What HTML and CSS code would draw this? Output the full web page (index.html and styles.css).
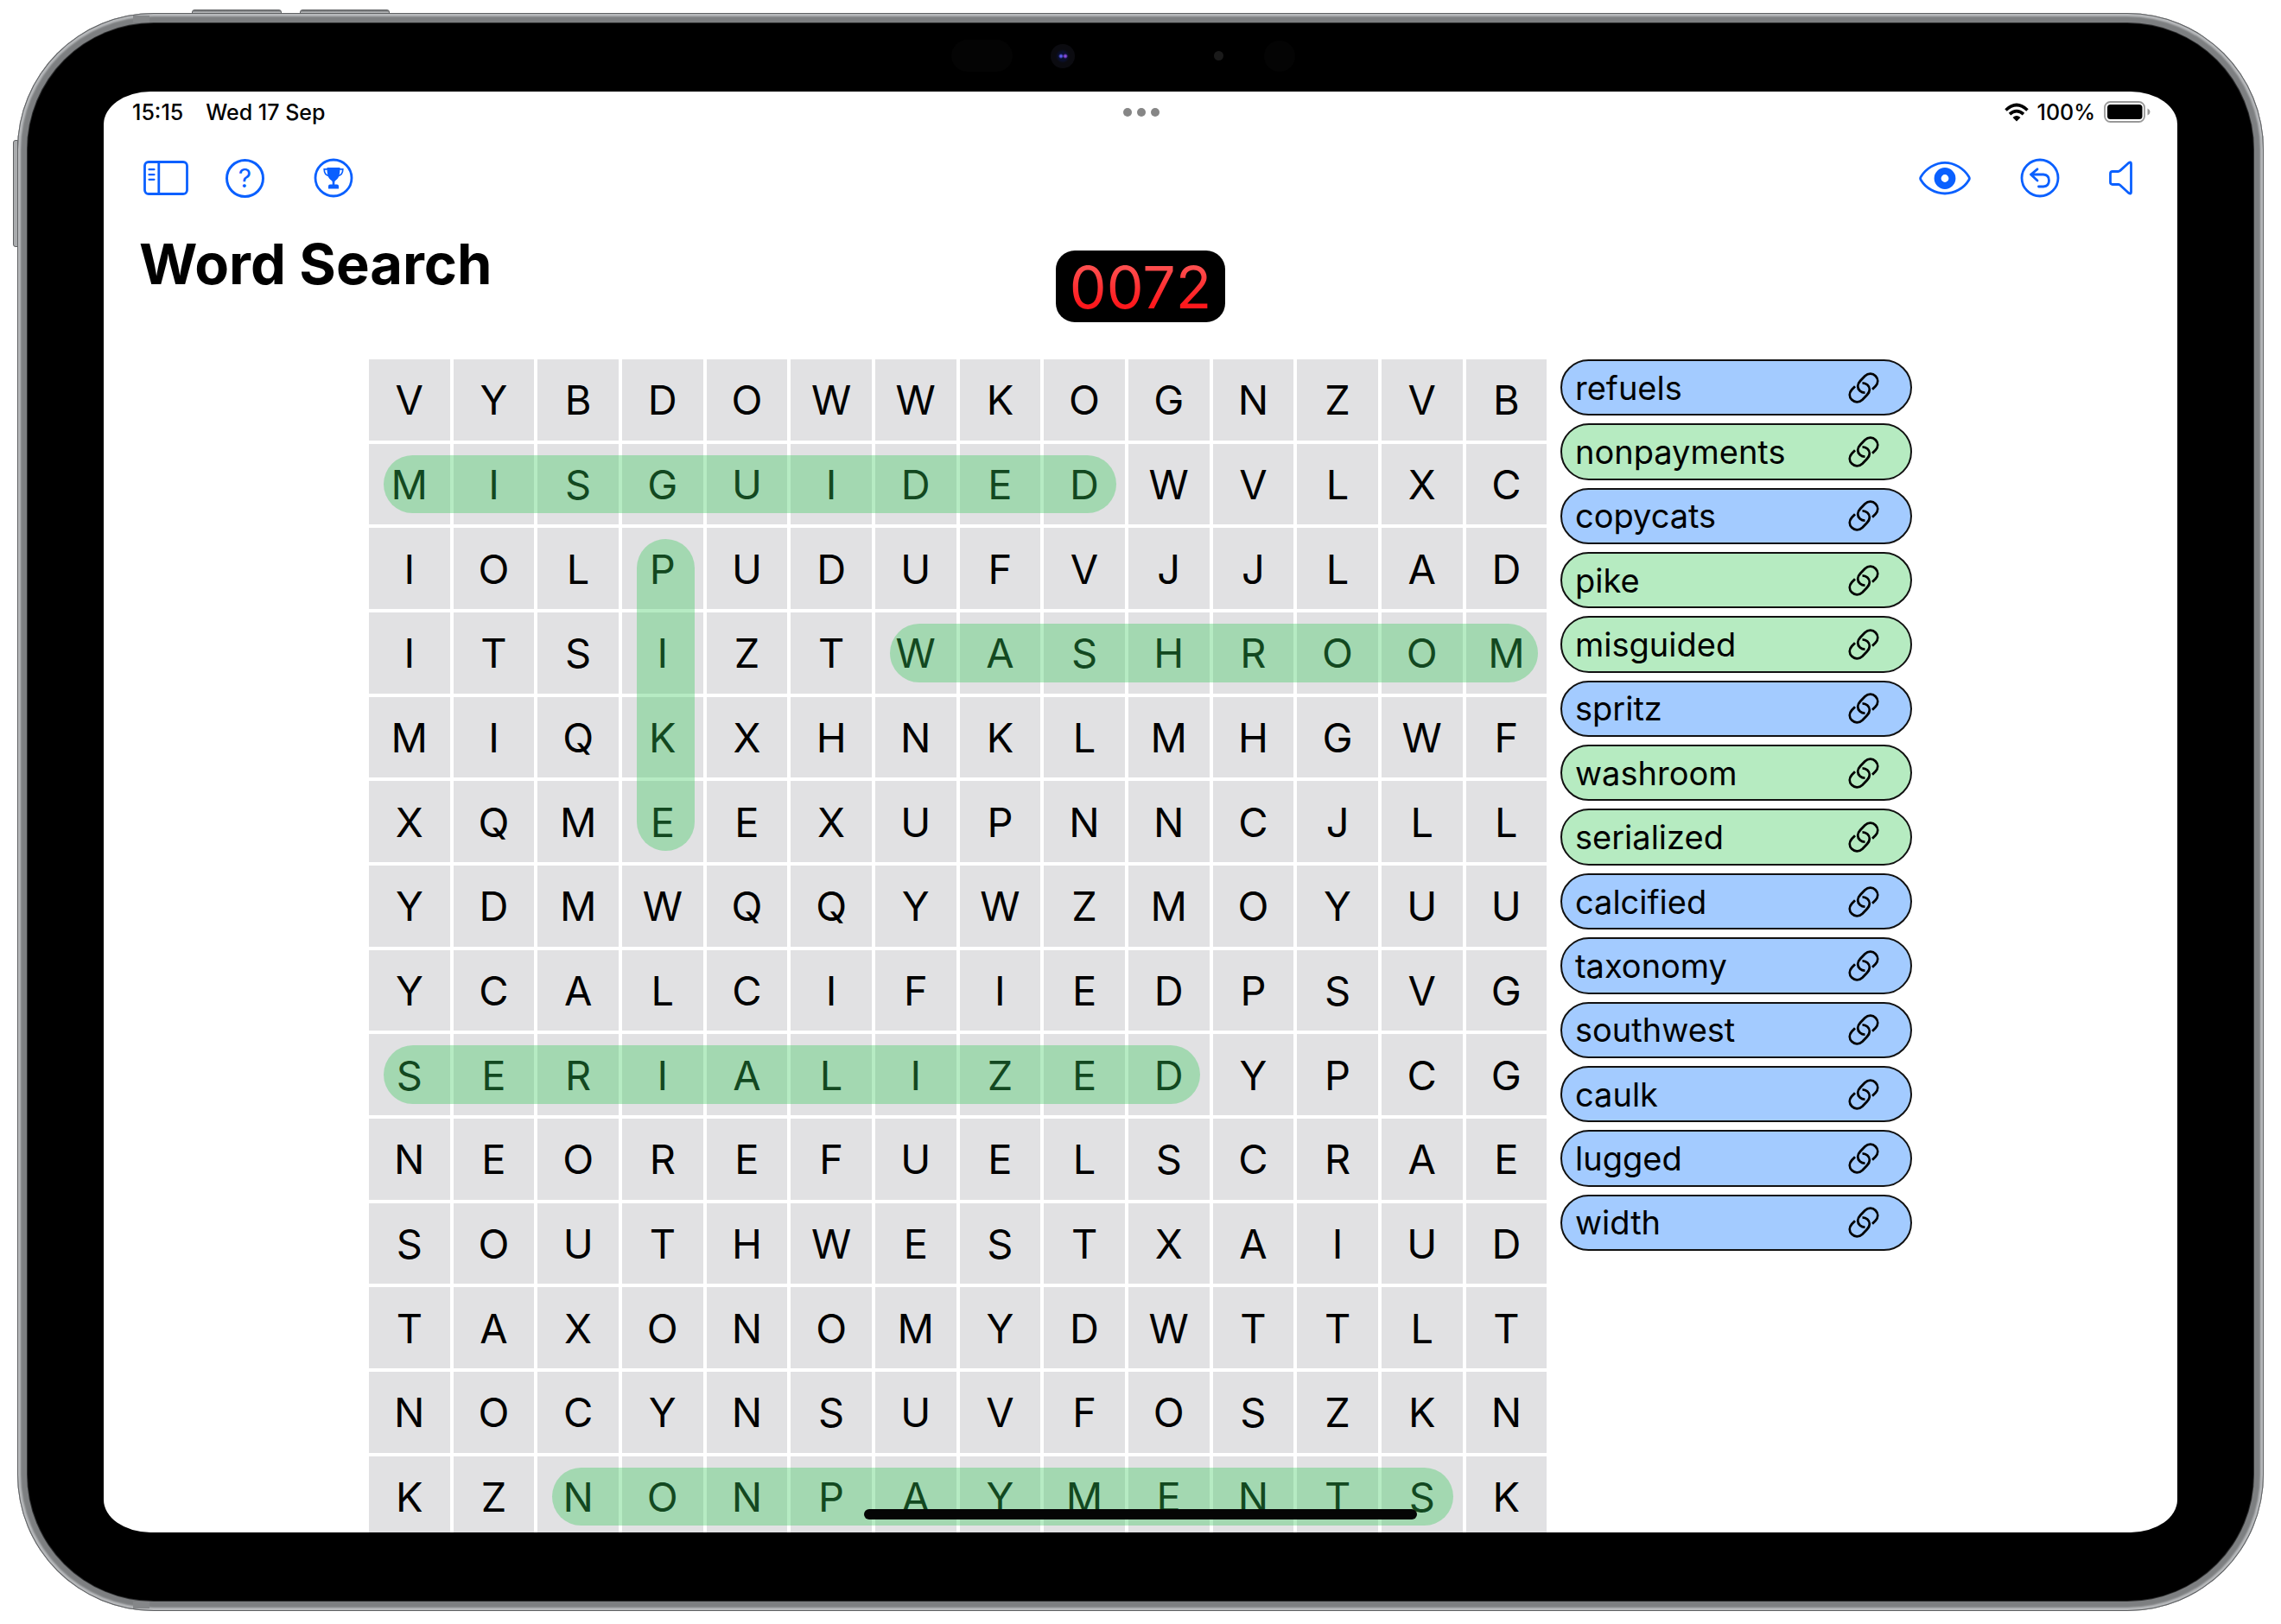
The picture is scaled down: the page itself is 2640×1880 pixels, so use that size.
FILE: index.html
```html
<!DOCTYPE html>
<html lang="en">
<head>
<meta charset="utf-8">
<title>Word Search</title>
<link rel="stylesheet" href="styles.css">
</head>
<body>
<svg class="defs" aria-hidden="true">
  <symbol id="link" viewBox="0 0 36 36">
    <g fill="none" stroke="currentColor" stroke-width="2.8" stroke-linecap="butt" stroke-linejoin="round">
      <path d="M16.500 12.300C21 12.300 24.800 15.500 24.800 20Q24.800 23 22 26L16.500 31.700C12.500 35.500 7.500 35 4.300 31.800C1 28.500 1 23.800 4.300 20L8 16.300"/>
      <path d="M19.500 23.700C15 23.700 11.200 20.500 11.200 16Q11.200 13 14 10L19.500 4.300C23.500 .500 28.500 1 31.700 4.200C35 7.500 35 12.200 31.700 16L28 19.700"/>
    </g>
  </symbol>
</svg>
<div class="device">
  <i class="key key-top-a"></i><i class="key key-top-b"></i><i class="key key-side"></i>
  <i class="band band-top"></i><i class="band band-bottom"></i>
  <div class="bezel">
    <div class="sensors" aria-hidden="true"><i class="s-pill"></i><i class="s-cam"></i><i class="s-mic"></i><i class="s-ring"></i></div>
    <div class="screen">
      <div class="status">
        <div class="status-left"><span>15:15</span><span>Wed 17 Sep</span></div>
        <div class="dots"><i></i><i></i><i></i></div>
        <div class="status-right">
          <svg width="28" height="22" viewBox="0 0 28 22" fill="none" stroke="#000" stroke-width="3.6"><path d="M1.500 8.500Q14-3.500 26.500 8.500"/><path d="M6 13.200Q14 6 22 13.200"/><path d="M14 21.500L9.500 17Q14 13 18.500 17Z" fill="#000" stroke="none"/></svg>
          <span>100%</span>
          <svg width="54" height="26" viewBox="0 0 54 26"><rect x="1" y="1" width="46" height="23" rx="6.500" fill="none" stroke="#999" stroke-width="1.800"/><rect x="4" y="4" width="40.500" height="17" rx="3.500"/><path d="M50.500 8.500Q53.500 10 53.500 12.500T50.500 16.500Z" fill="#999"/></svg>
        </div>
      </div>
      <nav class="toolbar">
        <div class="tools tools-left">
          <button class="tool" aria-label="Sidebar"><svg width="52" height="40" viewBox="0 0 52 40" fill="none" stroke="currentColor" stroke-width="2.800"><rect x="1.500" y="1.500" width="49" height="37" rx="4.500"/><path d="M17.800 1.500V38.500"/><path d="M6.500 10.200H12.500M6.500 16.200H12.500M6.500 21.800H12.500" stroke-width="2.200" stroke-linecap="round"/></svg></button>
          <button class="tool tool-help" aria-label="Help">?</button>
          <button class="tool tool-trophy" aria-label="Trophies"><svg width="46" height="46" viewBox="0 0 46 46" fill="none" stroke="currentColor"><circle cx="23" cy="23" r="21" stroke-width="2.800"/><path d="M15.500 11H30.500C30.500 18.500 29.500 23.500 25 26.200Q24.300 26.700 24.300 28V30.500H27Q29 30.500 29 32.500V35.500H17V32.500Q17 30.500 19 30.500H21.700V28Q21.700 26.700 21 26.200C16.500 23.500 15.500 18.500 15.500 11Z" fill="currentColor" stroke="none"/><path d="M16 12.800H12.200Q12.200 19.800 18.200 20.800M30 12.800H33.800Q33.800 19.800 27.800 20.800" stroke-width="1.700"/></svg></button>
        </div>
        <div class="tools tools-right">
          <button class="tool" aria-label="Reveal"><svg width="60" height="40" viewBox="0 0 60 40" fill="none" stroke="currentColor" stroke-width="2.800"><path d="M2.300 22.500Q1 20.500 2.300 18.500C8 9 19 2.300 30 2.300S52 9 57.700 18.500Q59 20.500 57.700 22.500C52 32 41 38 30 38S8 32 2.300 22.500Z"/><circle cx="30" cy="20.500" r="8.400" stroke-width="8"/></svg></button>
          <button class="tool" aria-label="Undo"><svg width="46" height="46" viewBox="0 0 46 46" fill="none" stroke="currentColor" stroke-width="2.800" stroke-linecap="round" stroke-linejoin="round"><circle cx="23" cy="23" r="21"/><path d="M20 12.800L12.500 19L20 26M12.500 19H27Q33.500 19.500 33.500 26T27 33H21.500"/></svg></button>
          <button class="tool" aria-label="Sound"><svg width="28" height="40" viewBox="0 0 28 40" fill="none" stroke="currentColor" stroke-width="2.800" stroke-linejoin="round"><path d="M4 12.500H10.500Q11.800 12.500 12.700 11.600L22.500 2.700Q25.500 .800 25.500 3.500V36.500Q25.500 39.200 22.500 37.300L12.700 28.300Q11.800 27.500 10.500 27.500H4Q1.500 27.500 1.500 25V15Q1.500 12.500 4 12.500Z"/></svg></button>
        </div>
      </nav>
      <header class="heading">
        <h1>Word Search</h1>
        <div class="timer"><span>0072</span></div>
      </header>
      <main class="game">
        <div class="board">
          <div class="letters">
            <b>V</b><b>Y</b><b>B</b><b>D</b><b>O</b><b>W</b><b>W</b><b>K</b><b>O</b><b>G</b><b>N</b><b>Z</b><b>V</b><b>B</b>
            <b>M</b><b>I</b><b>S</b><b>G</b><b>U</b><b>I</b><b>D</b><b>E</b><b>D</b><b>W</b><b>V</b><b>L</b><b>X</b><b>C</b>
            <b>I</b><b>O</b><b>L</b><b>P</b><b>U</b><b>D</b><b>U</b><b>F</b><b>V</b><b>J</b><b>J</b><b>L</b><b>A</b><b>D</b>
            <b>I</b><b>T</b><b>S</b><b>I</b><b>Z</b><b>T</b><b>W</b><b>A</b><b>S</b><b>H</b><b>R</b><b>O</b><b>O</b><b>M</b>
            <b>M</b><b>I</b><b>Q</b><b>K</b><b>X</b><b>H</b><b>N</b><b>K</b><b>L</b><b>M</b><b>H</b><b>G</b><b>W</b><b>F</b>
            <b>X</b><b>Q</b><b>M</b><b>E</b><b>E</b><b>X</b><b>U</b><b>P</b><b>N</b><b>N</b><b>C</b><b>J</b><b>L</b><b>L</b>
            <b>Y</b><b>D</b><b>M</b><b>W</b><b>Q</b><b>Q</b><b>Y</b><b>W</b><b>Z</b><b>M</b><b>O</b><b>Y</b><b>U</b><b>U</b>
            <b>Y</b><b>C</b><b>A</b><b>L</b><b>C</b><b>I</b><b>F</b><b>I</b><b>E</b><b>D</b><b>P</b><b>S</b><b>V</b><b>G</b>
            <b>S</b><b>E</b><b>R</b><b>I</b><b>A</b><b>L</b><b>I</b><b>Z</b><b>E</b><b>D</b><b>Y</b><b>P</b><b>C</b><b>G</b>
            <b>N</b><b>E</b><b>O</b><b>R</b><b>E</b><b>F</b><b>U</b><b>E</b><b>L</b><b>S</b><b>C</b><b>R</b><b>A</b><b>E</b>
            <b>S</b><b>O</b><b>U</b><b>T</b><b>H</b><b>W</b><b>E</b><b>S</b><b>T</b><b>X</b><b>A</b><b>I</b><b>U</b><b>D</b>
            <b>T</b><b>A</b><b>X</b><b>O</b><b>N</b><b>O</b><b>M</b><b>Y</b><b>D</b><b>W</b><b>T</b><b>T</b><b>L</b><b>T</b>
            <b>N</b><b>O</b><b>C</b><b>Y</b><b>N</b><b>S</b><b>U</b><b>V</b><b>F</b><b>O</b><b>S</b><b>Z</b><b>K</b><b>N</b>
            <b>K</b><b>Z</b><b>N</b><b>O</b><b>N</b><b>P</b><b>A</b><b>Y</b><b>M</b><b>E</b><b>N</b><b>T</b><b>S</b><b>K</b>
          </div>
          <div class="marks" aria-hidden="true">
            <i class="mark-misguided"></i><i class="mark-pike"></i><i class="mark-washroom"></i><i class="mark-serialized"></i><i class="mark-nonpayments"></i>
          </div>
        </div>
        <ul class="words">
          <li>refuels<a href="#refuels" aria-label="Look up refuels"><svg><use href="#link"/></svg></a></li>
          <li class="found">nonpayments<a href="#nonpayments" aria-label="Look up nonpayments"><svg><use href="#link"/></svg></a></li>
          <li>copycats<a href="#copycats" aria-label="Look up copycats"><svg><use href="#link"/></svg></a></li>
          <li class="found">pike<a href="#pike" aria-label="Look up pike"><svg><use href="#link"/></svg></a></li>
          <li class="found">misguided<a href="#misguided" aria-label="Look up misguided"><svg><use href="#link"/></svg></a></li>
          <li>spritz<a href="#spritz" aria-label="Look up spritz"><svg><use href="#link"/></svg></a></li>
          <li class="found">washroom<a href="#washroom" aria-label="Look up washroom"><svg><use href="#link"/></svg></a></li>
          <li class="found">serialized<a href="#serialized" aria-label="Look up serialized"><svg><use href="#link"/></svg></a></li>
          <li>calcified<a href="#calcified" aria-label="Look up calcified"><svg><use href="#link"/></svg></a></li>
          <li>taxonomy<a href="#taxonomy" aria-label="Look up taxonomy"><svg><use href="#link"/></svg></a></li>
          <li>southwest<a href="#southwest" aria-label="Look up southwest"><svg><use href="#link"/></svg></a></li>
          <li>caulk<a href="#caulk" aria-label="Look up caulk"><svg><use href="#link"/></svg></a></li>
          <li>lugged<a href="#lugged" aria-label="Look up lugged"><svg><use href="#link"/></svg></a></li>
          <li>width<a href="#width" aria-label="Look up width"><svg><use href="#link"/></svg></a></li>
        </ul>
      </main>
      <i class="home-bar"></i>
    </div>
  </div>
</div>
</body>
</html>
```
FILE: styles.css
```css
* { box-sizing: border-box; }

body {
  margin: 0;
  padding: 15px 20px;
  height: 100vh;
  background: #fff;
  color: #000;
  font-family: Inter, "Liberation Sans", sans-serif;
}

.defs { position: absolute; width: 0; height: 0; }

/* Tablet body */
.device {
  position: relative;
  height: 100%;
  padding: 12px;
  border-radius: 158px;
  background: #7d7f81;
  box-shadow: inset 0 0 0 1px #5f6163, inset 0 0 2px 4px #b8babc;
}

.bezel {
  height: 100%;
  display: flex;
  flex-direction: column;
  padding: 0 88px 79px;
  border-radius: 146px;
  background: #000;
  box-shadow: 0 0 0 1px #2c2d2e;
}

.key { position: absolute; background: linear-gradient(#6b6d6f, #c0c2c4); border: 1px solid #5f6163; }
.key-top-a, .key-top-b { top: -4px; width: 104px; height: 5px; border-radius: 3px 3px 0 0; }
.key-top-a { left: 202px; }
.key-top-b { left: 327px; }
.key-side { left: -5px; top: 147px; width: 6px; height: 124px; border-radius: 3px 0 0 3px; background: #a9abad; }
.band { position: absolute; left: 134px; width: 19px; height: 8px; background: #858789; }
.band-top { top: 3px; }
.band-bottom { bottom: 3px; }

.sensors {
  display: grid;
  grid-template-columns: 1fr 71px 44px 28px 161px 11px 47px 36px 1fr;
  justify-content: center;
  align-items: center;
  height: 79px;
  padding: 0 40px 4px 0;
}
.sensors i { border-radius: 50px; background: #040404; }
.s-pill { grid-column: 2; height: 37px; }
.s-cam { grid-column: 4; height: 28px; }
.s-mic { grid-column: 6; height: 11px; }
.s-ring { grid-column: 8; height: 36px; }
.sensors .s-cam { background: radial-gradient(circle at 12px 14px, #5a5cf0 1px, transparent 3px), radial-gradient(circle at 17px 14px, #8a4ae0 1px, transparent 3px), radial-gradient(circle at 14px 14px, #0a1030 5px, #0b0b10 8px); }
.sensors .s-mic { background: #1a1a1a; }

/* Screen */
.screen {
  position: relative;
  flex: 1;
  min-height: 0;
  overflow: hidden;
  background: #fff;
  border-radius: 54px / 38px;
}

.status {
  display: grid;
  grid-template-columns: 1fr auto 1fr;
  align-items: center;
  height: 48px;
  padding: 0 31px 0 33px;
  font-size: 24px;
  font-weight: 500;
}
.status-left { display: flex; gap: 26px; }
.status-left, .status-right { font-size: 25px; }
.status-right { display: flex; align-items: center; justify-content: flex-end; gap: 10px; }
.dots { display: flex; gap: 6px; }
.dots i { width: 10px; height: 10px; border-radius: 50%; background: #868686; }

.toolbar {
  display: flex;
  justify-content: space-between;
  height: 104px;
  padding: 0 51px 0 46px;
}
.tools { display: flex; align-items: center; }
.tools-left { gap: 43px; }
.tools-right { gap: 57px; }
.tool { display: block; margin: 0; padding: 0; border: 0; background: none; color: #0a60ff; font: inherit; }
.tool svg { display: block; }
.tool-help { width: 45px; height: 45px; border: 3px solid #0a60ff; border-radius: 50%; font-size: 30px; line-height: 38px; text-align: center; }
.tool-trophy { margin-left: 14px; }

.heading {
  display: grid;
  grid-template-columns: 1fr auto 1fr;
  align-items: start;
  height: 158px;
  padding: 0 41px;
}
h1 { margin: 8px 0 0; font-size: 65px; line-height: 80px; font-weight: 700; }
.timer { margin-top: 32px; width: 196px; height: 83px; border-radius: 22px; background: #000; text-align: center; font-size: 68px; line-height: 84px; }
.timer span { background: linear-gradient(#ff5050 20%, #ff181c 75%); -webkit-background-clip: text; background-clip: text; color: transparent; }

.game {
  display: flex;
  justify-content: center;
  align-items: flex-start;
  gap: 16px;
  padding: 0 307px;
}
.board { position: relative; flex: 1; }
.letters, .marks { display: grid; grid-template-columns: repeat(14, 1fr); gap: 4px; }
.letters b {
  display: flex;
  align-items: center;
  justify-content: center;
  aspect-ratio: 1;
  background: #e1e1e3;
  font-size: 47px;
  font-weight: 400;
}
.marks { position: absolute; inset: 0; grid-template-rows: repeat(14, 1fr); }
.marks i { margin: 13px 10px 13px 17px; border-radius: 34px; background: rgba(52, 199, 89, .36); }
.mark-misguided { grid-area: 2 / 1 / 3 / 10; }
.mark-pike { grid-area: 3 / 4 / 7 / 5; }
.mark-washroom { grid-area: 4 / 7 / 5 / 15; }
.mark-serialized { grid-area: 9 / 1 / 10 / 11; }
.mark-nonpayments { grid-area: 14 / 3 / 15 / 14; }

.words {
  display: grid;
  grid-auto-rows: 1fr;
  gap: 9px;
  width: 407px;
  min-height: 1032px;
  margin: 0;
  padding: 0;
  list-style: none;
  font-size: 38px;
}
.words li {
  display: flex;
  align-items: center;
  justify-content: space-between;
  padding: 0 36px 0 15px;
  border: 2px solid #111;
  border-radius: 33px;
  background: #a3cbff;
}
.words .found { background: #b6ebc1; }
.words a { color: #000; }
.words svg { display: block; width: 36px; height: 36px; }

.home-bar {
  position: absolute;
  left: 50%;
  bottom: 15px;
  width: 640px;
  height: 12px;
  margin-left: -320px;
  border-radius: 6px;
  background: #050505;
}
```
